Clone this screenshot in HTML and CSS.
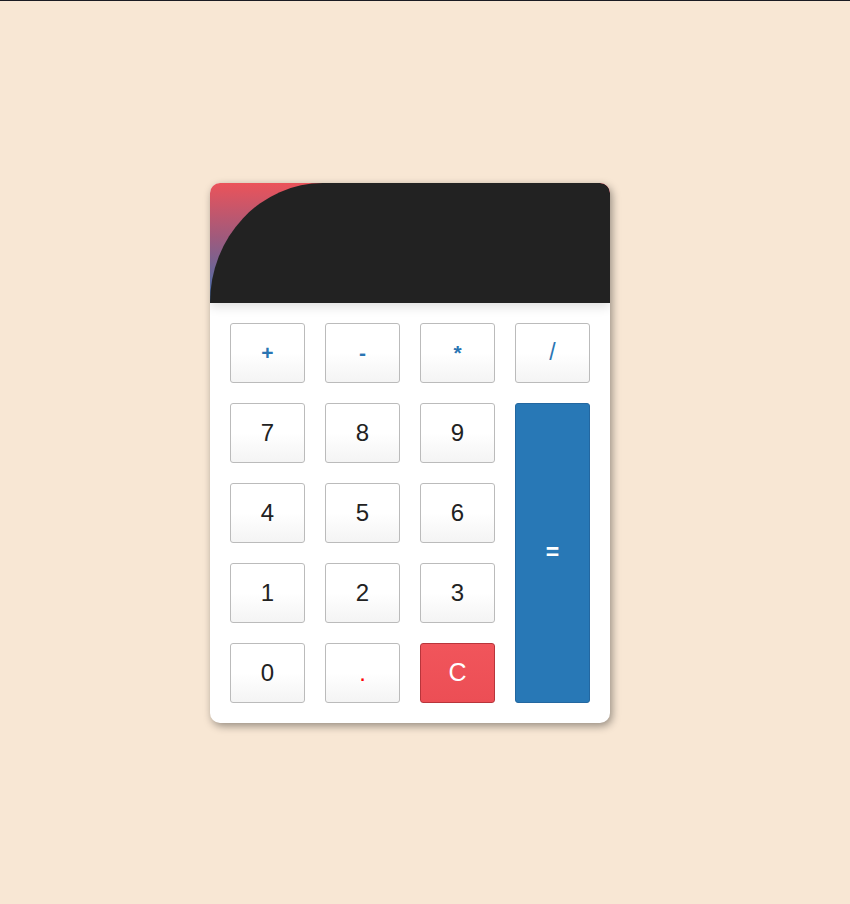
FILE: index.html
```html
<!DOCTYPE html>
<html lang="en">
<head>
<meta charset="utf-8">
<title>Calculator</title>
<link rel="stylesheet" href="styles.css">
</head>
<body>
<div class="page">
  <div class="calculator">
    <div class="display">
      <div class="screen"></div>
    </div>
    <div class="keys">
      <button class="key op">+</button>
      <button class="key op">-</button>
      <button class="key op">*</button>
      <button class="key op slash">/</button>
      <button class="key">7</button>
      <button class="key">8</button>
      <button class="key">9</button>
      <button class="key equals">=</button>
      <button class="key">4</button>
      <button class="key">5</button>
      <button class="key">6</button>
      <button class="key">1</button>
      <button class="key">2</button>
      <button class="key">3</button>
      <button class="key">0</button>
      <button class="key dot">.</button>
      <button class="key clear">C</button>
    </div>
  </div>
</div>
</body>
</html>
```
FILE: styles.css
```css
html, body {
  margin: 0;
  padding: 0;
}
html {
  border-top: 1px solid #1b1b22;
  background: #f8e7d4;
}
body {
  background: #f8e7d4;
  font-family: "Liberation Sans", Arial, sans-serif;
}
.page {
  height: 903px;
  box-sizing: border-box;
  padding-right: 30px;
  display: flex;
  align-items: center;
  justify-content: center;
}
.calculator {
  width: 400px;
  background: #fff;
  border-radius: 10px;
  box-shadow: 2px 3px 8px rgba(0, 0, 0, 0.4);
  overflow: hidden;
}
.display {
  height: 120px;
  background: linear-gradient(to bottom, #eb535a 0%, #a05a7c 45%, #3d6fb0 100%);
  position: relative;
  z-index: 1;
  box-shadow: 0 4px 10px rgba(0, 0, 0, 0.12);
}
.screen {
  height: 100%;
  background: #222;
  border-top-left-radius: 113px 120px;
  border-top-right-radius: 10px;
}
.keys {
  padding: 20px;
  display: grid;
  grid-template-columns: repeat(4, 75px);
  grid-auto-rows: 60px;
  gap: 20px;
}
.key {
  margin: 0;
  padding: 0;
  border: 1px solid #bbb;
  border-radius: 3px;
  background: linear-gradient(to bottom, #fff 0%, #fff 50%, #f4f4f4 100%);
  font-family: "Liberation Sans", Arial, sans-serif;
  font-size: 24px;
  color: #222;
  cursor: pointer;
}
.key.op {
  color: #2a75b3;
  font-weight: bold;
  font-size: 21px;
}
.key.op.slash {
  font-weight: normal;
  font-size: 23px;
}
.key.dot {
  color: #f00;
}
.key.clear {
  background: linear-gradient(to bottom, #f1555b 0%, #ec4e55 100%);
  border-color: #b8353b;
  color: #fff;
  font-size: 25px;
}
.key.equals {
  grid-column: 4;
  grid-row: 2 / span 4;
  background: #2878b6;
  border-color: #2367a0;
  color: #fff;
  font-weight: bold;
  font-size: 23px;
}
```
